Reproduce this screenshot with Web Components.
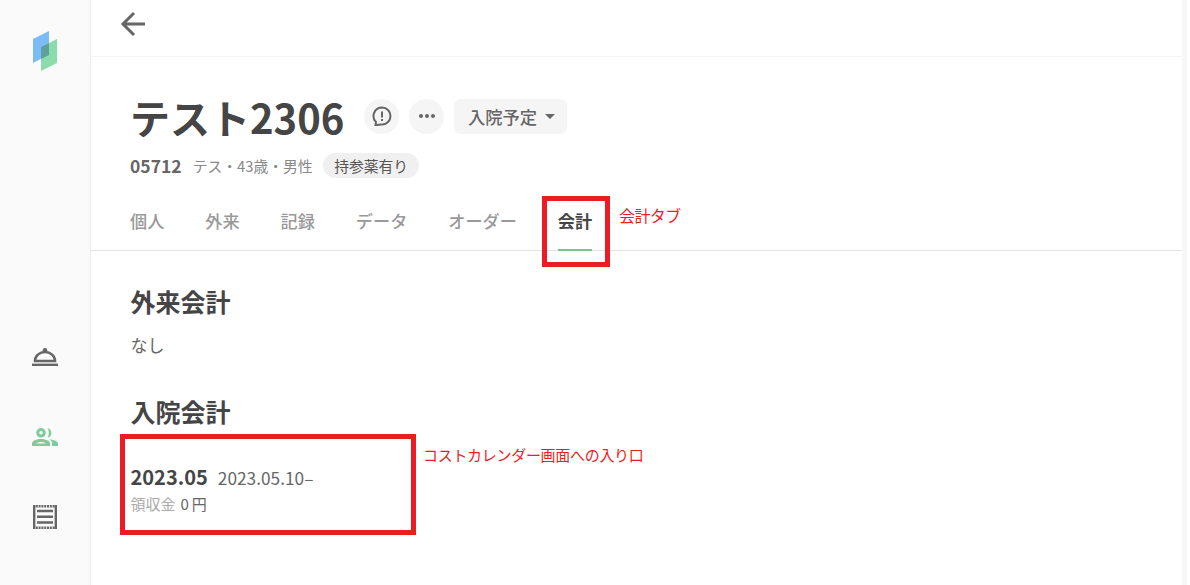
<!DOCTYPE html>
<html lang="ja">
<head>
<meta charset="utf-8">
<title>会計</title>
<style>
  html, body { margin: 0; height: 100%; background: #fff; }
  body { font-family: "Noto Sans CJK JP", "Noto Sans", sans-serif; color: #454545; overflow: hidden; }
</style>
</head>
<body>
<x-app>
  <x-patient-header slot="header" name="テスト2306" number="05712" info="テス・43歳・男性" tag="持参薬有り" status="入院予定"></x-patient-header>
  <x-tabs slot="tabs" items="個人,外来,記録,データ,オーダー,会計" active="会計"></x-tabs>
  <x-section heading="外来会計"><span style="font-size:17px;color:#666;line-height:24px">なし</span></x-section>
  <x-section heading="入院会計" second>
    <x-billing-row month="2023.05" range="2023.05.10–" label="領収金" amount="0&#8201;円"></x-billing-row>
  </x-section>
</x-app>
<x-callout style="left:542px;top:196px;width:68px;height:71px"></x-callout>
<x-callout style="left:120px;top:434px;width:296px;height:101px"></x-callout>
<x-note style="left:619px;top:204px;font-size:16px;letter-spacing:-.6px">会計タブ</x-note>
<x-note style="left:423px;top:444px;font-size:15px;letter-spacing:-.3px">コストカレンダー画面への入り口</x-note>

<script>
class XApp extends HTMLElement {
  constructor() {
    super();
    this.attachShadow({ mode: 'open' });
    this.shadowRoot.innerHTML = `
      <style>
        :host { display: flex; width: 1190px; height: 585px; }
        .main { flex: 1; min-width: 0; display: flex; flex-direction: column; }
        .strip { flex: none; width: 5px; margin-right: 3px; background: #f7f7f7; }
        .top { height: 57px; flex: none; border-bottom: 1px solid #f5f5f5; display: flex; align-items: center; padding-left: 28px; padding-bottom: 9px; box-sizing: border-box; }
        .head { padding: 35px 39px 0; }
        .tabs { border-bottom: 1px solid #e2e2e2; padding: 0 39px; }
        .content { padding: 32px 39.500px 0; }
      </style>
      <x-sidebar></x-sidebar>
      <div class="main">
        <div class="top">
          <svg width="30" height="30" viewBox="0 0 30 30" fill="none" stroke="#666" stroke-width="3">
            <path d="M26 15H5M15 4L4 15l11 11"/>
          </svg>
        </div>
        <div class="head"><slot name="header"></slot></div>
        <div class="tabs"><slot name="tabs"></slot></div>
        <div class="content"><slot></slot></div>
      </div>
      <div class="strip"></div>
    `;
  }
}

class XSidebar extends HTMLElement {
  constructor() {
    super();
    this.attachShadow({ mode: 'open' });
    this.shadowRoot.innerHTML = `
      <style>
        :host { display: flex; flex-direction: column; align-items: center; width: 91px; flex: none; box-sizing: border-box; background: #fafafa; border-right: 1px solid #ececec; }
        svg { display: block; }
        .logo { margin-top: 31px; }
        .nav { margin-top: 277px; display: flex; flex-direction: column; align-items: center; }
        .nav svg:nth-child(2) { margin-top: 62px; }
        .nav svg:nth-child(3) { margin-top: 59px; }
      </style>
      <svg class="logo" width="24" height="40" viewBox="0 0 24 40">
        <path d="M0 8L16 0V23.500L0 32z" fill="#7cbcf6"/>
        <path d="M8 16L24 8V32L8 40z" fill="#8bdcab"/>
        <path d="M8 16L16 12V24L8 28z" fill="#5f9f9c"/>
      </svg>
      <div class="nav">
        <svg width="26" height="18" viewBox="0 0 26 18" fill="none" stroke="#666">
          <circle cx="13" cy="2.300" r="2.300" fill="#666" stroke="none"/>
          <path d="M3 13a10 9 0 0 1 20 0z" stroke-width="2.600"/>
          <path d="M0 16.800h26" stroke-width="2.400"/>
        </svg>
        <svg width="26" height="18" viewBox="0 0 26 18" fill="#7fcb9c">
          <path fill-rule="evenodd" d="M9 0a4.800 4.800 0 1 1 0 9.600A4.800 4.800 0 0 1 9 0zm0 3a1.800 1.800 0 1 0 0 3.600A1.800 1.800 0 0 0 9 3z"/>
          <path d="M15.500.2a4.800 4.800 0 0 1 0 9.400c1.800-2.800 1.800-6.600 0-9.400z"/>
          <path fill-rule="evenodd" d="M0 18v-2.500C0 12.500 5 11 9 11s9 1.500 9 4.500V18zm4-2.500h10c-1-.8-3-1.500-5-1.500s-4 .7-5 1.500z"/>
          <path d="M17.500 11.300c4 .4 8.500 1.800 8.500 4.500V18h-6v-3c0-1.500-1-2.800-2.500-3.700z"/>
        </svg>
        <svg width="24" height="24" viewBox="0 0 24 24" fill="none" stroke="#666">
          <path d="M1.200 0v24M22.800 0v24" stroke-width="2.400"/>
          <path d="M0 1.200h24M0 22.800h24" stroke-width="2.400" stroke-dasharray="2 .8"/>
          <path d="M4 6h16M4 11.800h16M4 17.500h16" stroke-width="2.400"/>
        </svg>
      </div>
    `;
  }
}

class XPatientHeader extends HTMLElement {
  constructor() {
    super();
    this.attachShadow({ mode: 'open' });
  }

  connectedCallback() {
    const a = (n) => this.getAttribute(n) || '';
    this.shadowRoot.innerHTML = `
      <style>
        :host { display: block; }
        .row { display: flex; align-items: center; height: 50px; }
        h1 { margin: 0 20px 0 0; font-size: 40px; font-weight: 700; line-height: 50px; color: #454545; }
        .round { width: 35px; height: 35px; border-radius: 50%; background: #f5f5f5; display: flex; align-items: center; justify-content: center; margin: 0 10px 2px 0; }
        .status { height: 35px; border-radius: 6px; background: #f5f5f5; display: flex; align-items: center; gap: 8px; padding: 0 12px 0 13.500px; margin-bottom: 2px; font-size: 17.300px; font-weight: 500; color: #666; }
        .caret { width: 0; height: 0; border: 5px solid transparent; border-top-color: #666; border-bottom: 0; }
        .meta { display: flex; align-items: center; height: 26px; margin-top: 10px; font-size: 14.800px; color: #888; }
        .num { font-size: 17.500px; font-weight: 700; color: #666; margin-right: 11px; }
        .tag { margin-left: 10.500px; background: #f0f0f0; color: #555; border-radius: 13px; padding: 0 11px; height: 25px; line-height: 25px; }
      </style>
      <div class="row">
        <h1>${a('name')}</h1>
        <span class="round">
          <svg width="20" height="20" viewBox="0 0 20 20" fill="none" stroke="#666" stroke-width="2">
            <path d="M10 1.500a8.500 8.500 0 0 1 0 17c-1.500 0-3-.2-4.500.5L3.500 19l.5-3A8.500 8.500 0 0 1 10 1.500z"/>
            <path d="M10 5.500v6M10 13v2"/>
          </svg>
        </span>
        <span class="round">
          <svg width="18" height="6" viewBox="0 0 18 6" fill="#666"><circle cx="3" cy="3" r="2"/><circle cx="9" cy="3" r="2"/><circle cx="15" cy="3" r="2"/></svg>
        </span>
        <span class="status">${a('status')}<span class="caret"></span></span>
      </div>
      <div class="meta">
        <span class="num">${a('number')}</span>
        <span>${a('info')}</span>
        <span class="tag">${a('tag')}</span>
      </div>
    `;
  }
}

class XTabs extends HTMLElement {
  constructor() {
    super();
    this.attachShadow({ mode: 'open' });
  }

  connectedCallback() {
    const active = this.getAttribute('active');
    const items = this.getAttribute('items').split(',');
    this.shadowRoot.innerHTML = `
      <style>
        :host { display: flex; gap: 41px; padding-top: 20px; }
        .tab { font-size: 17.150px; font-weight: 500; line-height: 24px; color: #999; padding: 11px 0 16px; border-bottom: 2px solid transparent; margin-bottom: -1px; }
        .tab.on { color: #454545; font-weight: 700; border-bottom-color: #72c693; }
      </style>
      ${items.map((t) => `<span class="tab ${t === active ? 'on' : ''}">${t}</span>`).join('')}
    `;
  }
}

class XSection extends HTMLElement {
  constructor() {
    super();
    this.attachShadow({ mode: 'open' });
  }

  connectedCallback() {
    this.shadowRoot.innerHTML = `
      <style>
        :host { display: block; }
        :host([second]) { margin-top: 36px; }
        h2 { margin: 0 0 14px; font-size: 25px; font-weight: 700; line-height: 36px; color: #454545; }
      </style>
      <h2>${this.getAttribute('heading')}</h2>
      <slot></slot>
    `;
  }
}

class XBillingRow extends HTMLElement {
  constructor() {
    super();
    this.attachShadow({ mode: 'open' });
  }

  connectedCallback() {
    const a = (n) => this.getAttribute(n) || '';
    this.shadowRoot.innerHTML = `
      <style>
        :host { display: block; margin-top: 34px; }
        .l1 { display: flex; align-items: baseline; gap: 10px; line-height: 28px; }
        .month { font-size: 20px; font-weight: 700; color: #454545; }
        .range { font-size: 17.300px; color: #666; }
        .l2 { font-size: 15px; line-height: 24px; color: #666; }
        .label { color: #aaa; margin-right: 5px; }
      </style>
      <div class="l1"><span class="month">${a('month')}</span><span class="range">${a('range')}</span></div>
      <div class="l2"><span class="label">${a('label')}</span>${a('amount')}</div>
    `;
  }
}

class XCallout extends HTMLElement {
  constructor() {
    super();
    this.attachShadow({ mode: 'open' }).innerHTML = `
      <style>:host { position: absolute; box-sizing: border-box; border: 5px solid #ed1c24; }</style>
    `;
  }
}

class XNote extends HTMLElement {
  constructor() {
    super();
    this.attachShadow({ mode: 'open' }).innerHTML = `
      <style>:host { position: absolute; color: #ed1c24; line-height: 22px; font-family: "Noto Sans CJK JP", sans-serif; font-weight: 400; white-space: nowrap; }</style>
      <slot></slot>
    `;
  }
}

customElements.define('x-app', XApp);
customElements.define('x-sidebar', XSidebar);
customElements.define('x-patient-header', XPatientHeader);
customElements.define('x-tabs', XTabs);
customElements.define('x-section', XSection);
customElements.define('x-billing-row', XBillingRow);
customElements.define('x-callout', XCallout);
customElements.define('x-note', XNote);
</script>
</body>
</html>
